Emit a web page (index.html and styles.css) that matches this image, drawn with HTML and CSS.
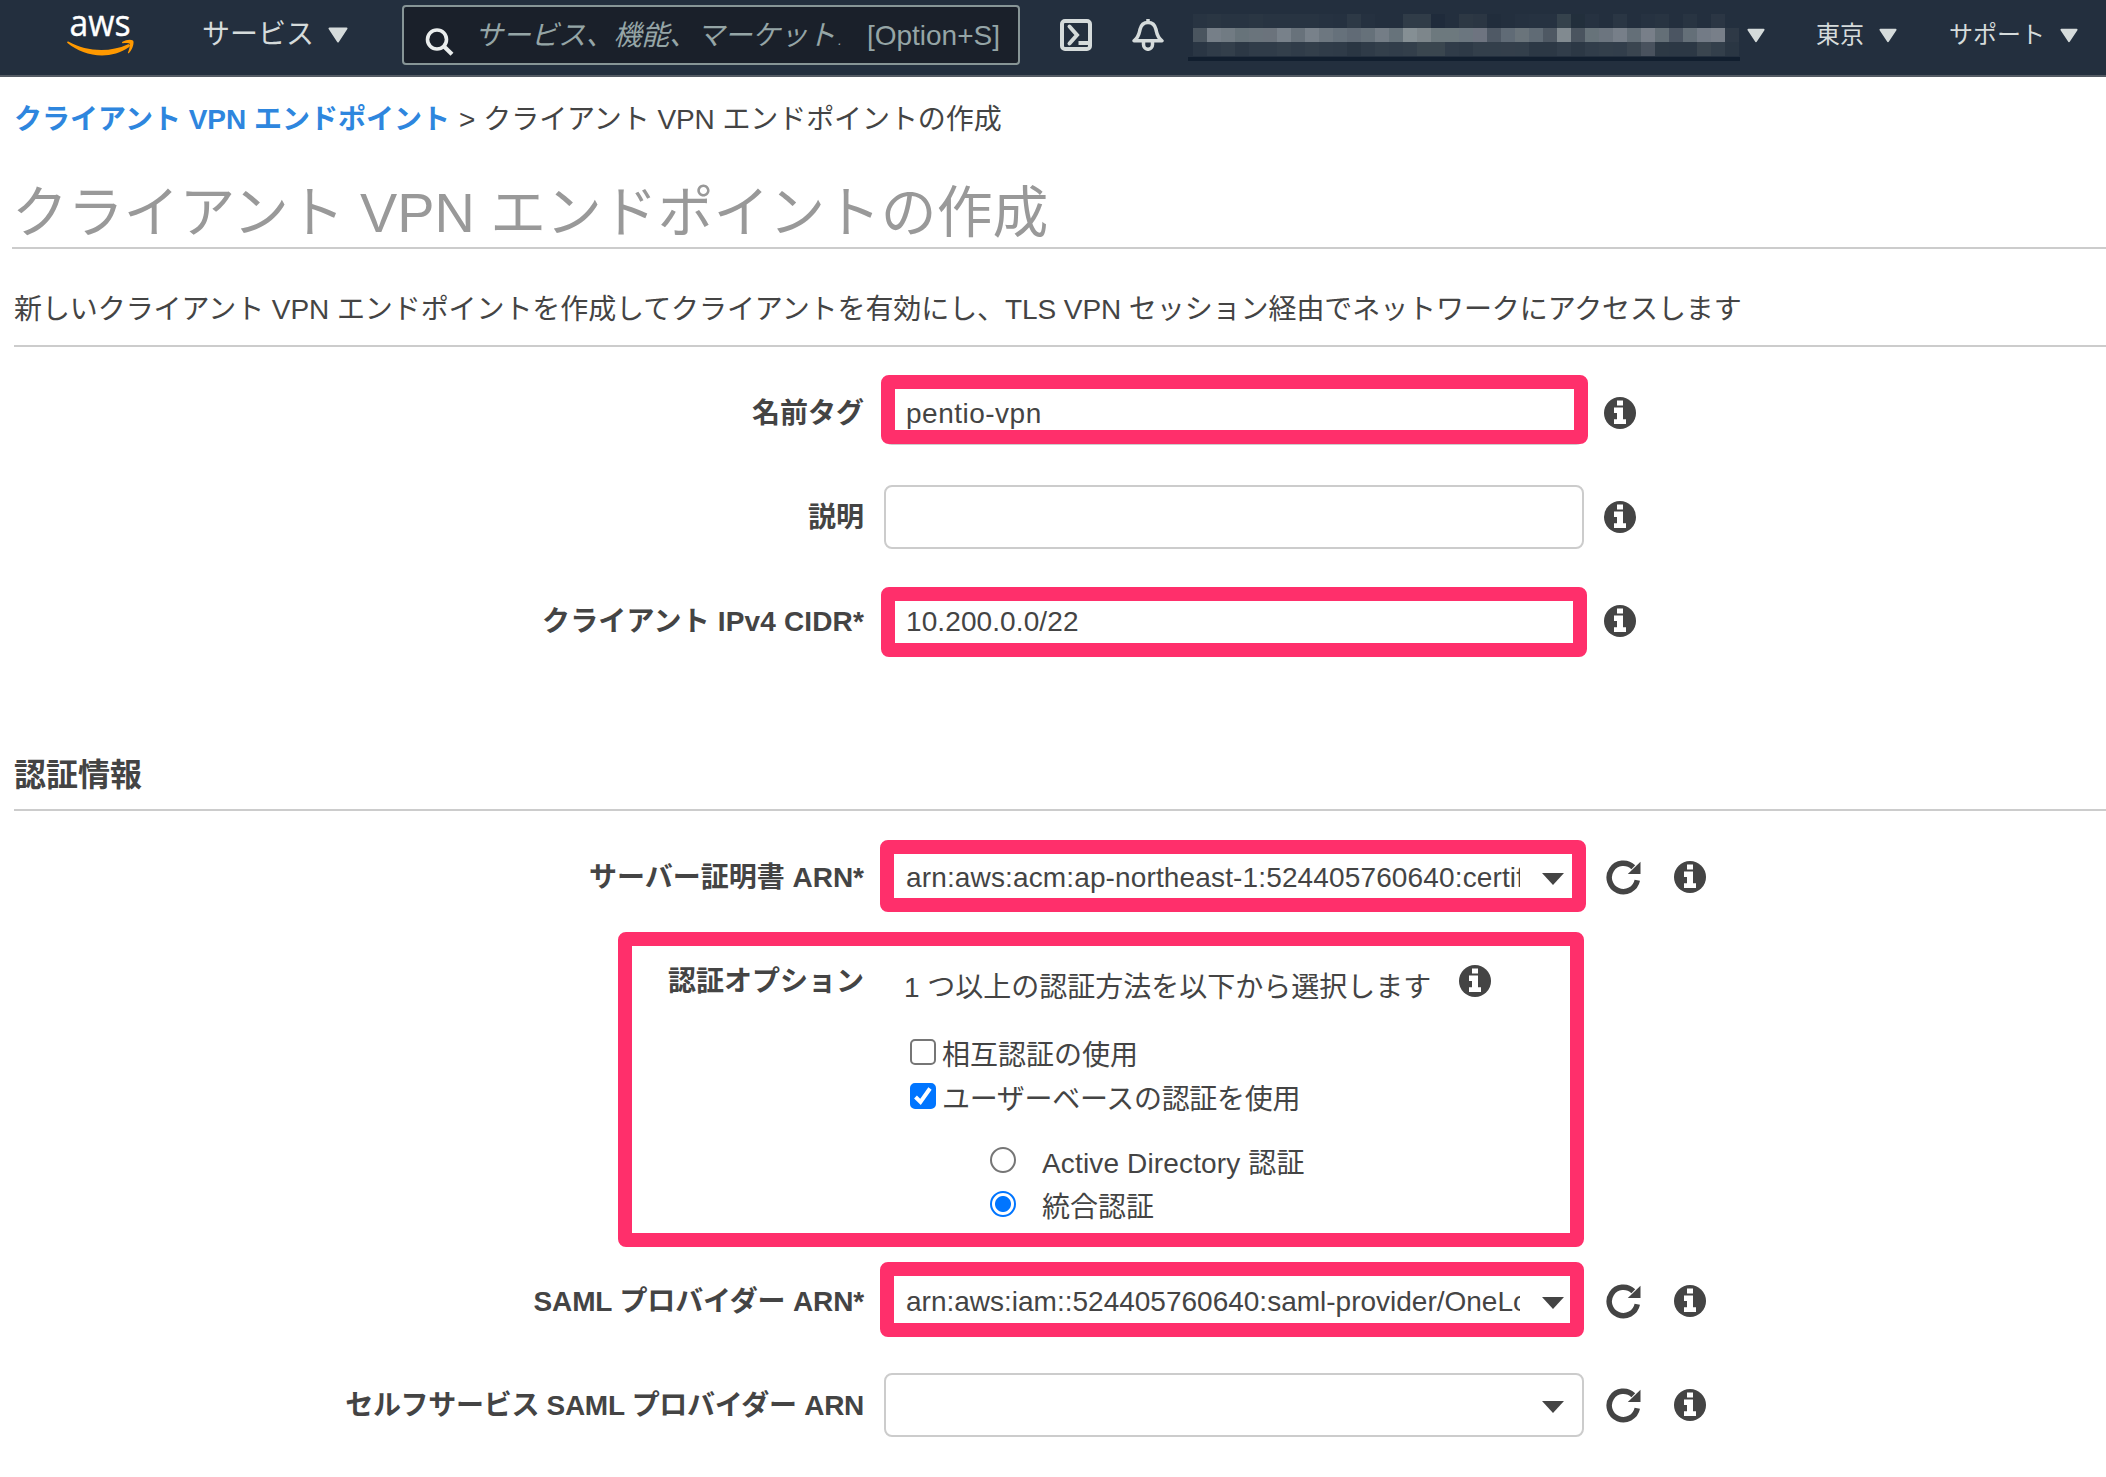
FILE: index.html
```html
<!DOCTYPE html>
<html lang="ja">
<head>
	<meta charset="utf-8">
	<title>クライアント VPN エンドポイントの作成</title>
	<link rel="stylesheet" href="styles.css">
</head>
<body>
	<!-- shared icons -->
	<svg class="defs" width="0" height="0">
		<symbol id="info" viewBox="0 0 32 32">
			<circle cx="16" cy="16" r="16" fill="#444"/>
			<path fill="#fff" d="M13 3.500h6v5h-6zM10 10.500h9v11.800h3V27H10v-4.700h3V16h-3z"/>
		</symbol>
		<symbol id="refresh" viewBox="0 0 35 35">
			<path fill="none" stroke="#444" stroke-width="5.500" d="M31.300 20.300A14.200 14.200 0 1 1 27.300 7.300"/>
			<path fill="#444" d="M34.500 1.800v12.200H21.800z"/>
		</symbol>
		<symbol id="caret" viewBox="0 0 20 16">
			<path fill="#d5dbdb" stroke="#d5dbdb" stroke-width="2" stroke-linejoin="round" d="M1.500 1.500h17L10 14.500z"/>
		</symbol>
	</svg>

	<header class="nav">
		<a class="logo">
			<svg width="70" height="44" viewBox="0 0 70 44">
				<text x="2.500" y="22" textLength="61" lengthAdjust="spacingAndGlyphs">aws</text>
				<path fill="#f90" d="M1.300 27.500C20 38 43 38.500 60.500 30.500c2-.8 3.500 1.200 1.700 2.600C54 39 44 41.500 35 41.500 22 41.500 9.500 36.500.500 29c-.8-.8-.2-2 .8-1.500z"/>
				<path fill="#f90" d="M55.500 27.800c3.500-2.300 8.500-2.600 10.500-1.300 1.500 1.500-.2 9-4 12.600-.7.500-1.400.2-1-.6 1-2.500 2.500-7.500 1.700-8.700-.8-1.200-4.700-.9-6.900-.6-.9.100-1.200-.8-.3-1.400z"/>
			</svg>
		</a>
		<a class="services">サービス<svg width="20" height="16"><use href="#caret"/></svg></a>
		<div class="search">
			<svg width="30" height="28" viewBox="0 0 30 28">
				<circle cx="12" cy="11.500" r="9.500" fill="none" stroke="#eaeded" stroke-width="3.600"/>
				<path d="M18.500 18l8.500 8.200" stroke="#eaeded" stroke-width="4.200"/>
			</svg>
			<span class="placeholder">サービス、機能、マーケット<small>.</small></span>
			<span class="shortcut">[Option+S]</span>
		</div>
		<svg class="shell" width="32" height="32" viewBox="0 0 32 32" fill="none" stroke="#d5dbdb" stroke-width="4">
			<rect x="2" y="2" width="28" height="28" rx="3"/>
			<path d="M9.500 7.500l7.500 8.500-7.500 8.500" stroke-linecap="round"/>
			<path d="M18.500 24H30"/>
		</svg>
		<svg class="bell" width="32" height="32" viewBox="0 0 32 32" fill="none" stroke="#d5dbdb" stroke-width="3.500" stroke-linejoin="round">
			<path d="M2 21.800C7 18 7 15 8 10.500 9 6 11.500 3.500 16 3.500s7 2.500 8 7c1 4.500 1 7.500 6 11.300z"/>
			<path d="M11.500 23v2.500a4.500 4.800 0 0 0 9 0V23M16 0v4"/>
		</svg>
		<a class="account"><svg id="account" width="552" height="52"></svg><svg width="18" height="15"><use href="#caret"/></svg></a>
		<a class="region">東京<svg width="18" height="15"><use href="#caret"/></svg></a>
		<a class="support">サポート<svg width="18" height="15"><use href="#caret"/></svg></a>
	</header>

	<nav class="breadcrumb"><a>クライアント VPN エンドポイント</a><span class="sep">&gt;</span><span>クライアント VPN エンドポイントの作成</span></nav>
	<h1>クライアント VPN エンドポイントの作成</h1>
	<p class="lead">新しいクライアント VPN エンドポイントを作成してクライアントを有効にし、TLS VPN セッション経由でネットワークにアクセスします</p>

	<section class="form">
		<div class="row">
			<label>名前タグ</label>
			<div class="field name">pentio-vpn<i class="mark mark-name"></i></div>
			<svg class="info"><use href="#info"/></svg>
		</div>
		<div class="row">
			<label>説明</label>
			<div class="field"></div>
			<svg class="info"><use href="#info"/></svg>
		</div>
		<div class="row">
			<label class="wide">クライアント IPv4 CIDR*</label>
			<div class="field cidr">10.200.0.0/22<i class="mark mark-cidr"></i></div>
			<svg class="info"><use href="#info"/></svg>
		</div>
	</section>

	<h2>認証情報</h2>

	<section class="form">
		<div class="row">
			<label>サーバー証明書 ARN*</label>
			<div class="field select"><span class="cert">arn:aws:acm:ap-northeast-1:524405760640:certif</span><i class="mark mark-cert"></i></div>
			<svg class="refresh"><use href="#refresh"/></svg>
			<svg class="info"><use href="#info"/></svg>
		</div>
		<div class="row options-row">
			<label>認証オプション</label>
			<div class="options">
				<div class="hint">1 つ以上の認証方法を以下から選択します<svg class="info"><use href="#info"/></svg></div>
				<div class="choice"><i class="box"></i>相互認証の使用</div>
				<div class="choice tight"><i class="box checked"><svg width="26" height="26" viewBox="0 0 26 26"><path d="M5.500 14l5 5 9.500-13.500" fill="none" stroke="#fff" stroke-width="4"/></svg></i>ユーザーベースの認証を使用</div>
				<div class="choice sub first wide"><i class="radio"></i>Active Directory 認証</div>
				<div class="choice sub"><i class="radio checked"></i>統合認証</div>
			</div>
			<i class="mark mark-options"></i>
		</div>
		<div class="row">
			<label class="snug">SAML プロバイダー ARN*</label>
			<div class="field select"><span>arn:aws:iam::524405760640:saml-provider/OneLo</span><i class="mark mark-saml"></i></div>
			<svg class="refresh"><use href="#refresh"/></svg>
			<svg class="info"><use href="#info"/></svg>
		</div>
		<div class="row">
			<label class="tight">セルフサービス SAML プロバイダー ARN</label>
			<div class="field select"><span></span></div>
			<svg class="refresh"><use href="#refresh"/></svg>
			<svg class="info"><use href="#info"/></svg>
		</div>
	</section>

	<script>
		// masked account name, one colour per 14px cell
		var rows = [
			{ y: 4, h: 14, c: '283442 2a3643 283442 283442 2a3643 283442 283442 283442 283442 263241 253140 2d3946 253140 232f3e 232f3e 303c48 303c48 1f2b3b 232f3e 2d3844 2b3643 212d3c 232f3e 253140 263241 263241 35424c 222f3c 263241 232f3e 2a3644 232f3e 263241 283442 232f3e 283442 232f3e 2b3644 232f3e' },
			{ y: 18, h: 14, c: '4a555f 767f88 717b83 67737a 6a747c 6b737c 78818a 68727b 78818a 6d7780 66717b 616b76 66717a 747d86 67737b 858f94 7d868b 6d797e 6d797e 6b767f 6e7480 4f5965 606b76 6a747b 606b75 4e5863 818a90 4a545f 67737a 6c757f 777f89 646f78 787f89 646f77 4b5562 646f78 737b86 787f89 2e3946' },
			{ y: 32, h: 14, c: '2a3644 303c49 333f4b 2c3845 303c49 303c49 333f4b 303c49 333f4b 303c49 2f3b48 2a3643 2f3b48 333f4b 313d4a 333f4b 3a464f 3a464f 303c49 2e3a47 333f4b 333f4b 343f4b 333f4b 2c3845 2c3845 313d4a 2c3845 313d4a 333f4b 323e4b 3a4550 49525e 2d3945 2c3845 2c3845 3a454f 333f4b 2a3643' },
			{ y: 47, h: 4, c: '111e2e' }
		];
		var out = '';
		rows.forEach(function (row) {
			var cells = row.c.split(' ');
			cells.forEach(function (c, i) {
				var x = cells.length > 1 ? 5 + i * 14 : 0;
				out += '<rect x="' + x + '" y="' + row.y + '" width="' + (cells.length > 1 ? 14 : 552) + '" height="' + row.h + '" fill="#' + c + '"/>';
			});
		});
		document.getElementById('account').innerHTML = out;
	</script>
</body>
</html>
```

FILE: styles.css
```css
* {
	box-sizing: border-box;
}
body {
	margin: 0;
	background: #fff;
	color: #444;
	font: 28px/40px "Liberation Sans", "Noto Sans CJK JP", sans-serif;
	overflow: hidden;
}
svg {
	display: block;
	flex: none;
}
.defs {
	position: absolute;
}

/* top bar */
.nav {
	display: flex;
	align-items: flex-start;
	height: 77px;
	border-bottom: 2px solid #545b64;
	background: #232f3e;
	color: #d5dbdb;
	white-space: nowrap;
}
.nav a {
	display: flex;
	flex: none;
	align-items: center;
}
.logo {
	width: 135px;
	padding: 14px 0 0 67px;
}
.logo svg {
	overflow: visible;
}
.logo text {
	fill: #fff;
	stroke: #fff;
	stroke-width: .4px;
	font: 37px "Open Sans", sans-serif;
}
.services {
	width: 200px;
	margin-left: 67px;
	padding-top: 15px;
}
.services svg {
	margin-left: 14px;
}
.search {
	display: flex;
	width: 618px;
	height: 60px;
	margin-top: 5px;
	padding: 9px 18px 0 21px;
	border: 2px solid #879596;
	border-radius: 4px;
	background: #1a202a;
	color: #95a5a6;
}
.search svg {
	margin-top: 12px;
}
.placeholder {
	width: 372px;
	margin-left: 20px;
	font-style: italic;
	letter-spacing: -.3px;
}
.placeholder small {
	margin-left: 3px;
	font-size: 14px;
}
.shortcut {
	margin-left: 20px;
}
.shell {
	margin: 19px 0 0 40px;
}
.bell {
	margin: 19px 0 0 40px;
}
.account {
	margin: 10px 0 0 24px;
}
.account svg + svg {
	margin: -2px 0 0 7px;
}
.region,
.support {
	padding-top: 15px;
	font-size: 24px;
}
.region {
	margin-left: 51px;
}
.region svg {
	margin-left: 15px;
}
.support {
	margin-left: 52px;
}
.support svg {
	margin-left: 15px;
}

/* page head */
.breadcrumb {
	margin: 23px 14px 0;
	white-space: nowrap;
}
.breadcrumb a {
	color: #2e86de;
	font-weight: bold;
}
.breadcrumb span {
	letter-spacing: -.08px;
}
.sep {
	margin: 0 8px 0 9px;
}
h1 {
	height: 74px;
	margin: 35px 0 0 12px;
	border-bottom: 2px solid #ccc;
	color: #999;
	font-size: 55.800px;
	font-weight: normal;
	line-height: 76px;
}
.lead {
	height: 57px;
	margin: 41px 0 0 14px;
	border-bottom: 2px solid #ccc;
	letter-spacing: -.08px;
	white-space: nowrap;
}
h2 {
	height: 55px;
	margin: 103px 0 34px 14px;
	border-bottom: 2px solid #ccc;
	font-size: 32px;
	line-height: 39px;
}

/* form */
.form {
	display: grid;
	gap: 40px;
}
.lead + .form {
	margin-top: 34px;
}
.row {
	display: grid;
	grid-template-columns: 864px 700px auto auto;
	column-gap: 20px;
	align-items: center;
	justify-content: start;
	height: 64px;
	position: relative;
}
.row label {
	padding-top: 1px;
	font-weight: bold;
	text-align: right;
	white-space: nowrap;
}
.row .tight {
	letter-spacing: -.3px;
}
.row .snug {
	letter-spacing: -.15px;
}
.row .wide {
	letter-spacing: .15px;
}
.field {
	position: relative;
	height: 64px;
	padding: 11px 20px;
	border: 2px solid #ccc;
	border-radius: 8px;
}
.name {
	letter-spacing: .5px;
}
.cidr {
	letter-spacing: .1px;
}
.select span {
	display: block;
	width: 614px;
	overflow: hidden;
	white-space: nowrap;
}
.select .cert {
	letter-spacing: .14px;
}
.select::after {
	content: "";
	position: absolute;
	top: 26px;
	right: 18px;
	border: 11px solid transparent;
	border-top: 12px solid #444;
	border-bottom: 0;
}
.info {
	width: 32px;
	height: 32px;
}
.refresh {
	width: 35px;
	height: 35px;
	margin: 0 13px 0 2px;
}

/* auth options */
.options-row {
	height: 280px;
	align-items: start;
}
.options-row label {
	padding-top: 13px;
}
.options {
	padding-left: 20px;
	white-space: nowrap;
}
.hint {
	display: flex;
	height: 80px;
	padding-top: 19px;
}
.hint .info {
	margin: -3px 0 0 28px;
}
.choice {
	display: flex;
	height: 44px;
	padding-left: 6px;
	line-height: 54px;
}
.choice i {
	flex: none;
	width: 26px;
	height: 26px;
	margin: 10px 6px 0 0;
	border: 2px solid #767676;
	border-radius: 5px;
}
.choice .checked {
	border-color: #0075ff;
}
.box.checked {
	background: #0075ff;
}
.box svg {
	margin: -2px;
}
.choice .radio {
	margin-right: 26px;
	border-radius: 50%;
}
.radio.checked {
	background: radial-gradient(circle, #0075ff 7.500px, #fff 8.500px);
}
.sub {
	padding-left: 86px;
}
.first {
	margin-top: 20px;
}

/* pink callouts drawn over the form */
.mark {
	position: absolute;
	border: 14px solid #ff2f6b;
	border-radius: 8px;
}
.mark-name {
	inset: -8px -6px -1px -5px;
}
.mark-cidr {
	inset: -4px -5px -6px;
}
.mark-cert {
	inset: -7px -4px -5px -6px;
}
.mark-options {
	left: 618px;
	top: -17px;
	width: 966px;
	height: 315px;
}
.mark-saml {
	inset: -9px -2px -6px -6px;
}
```
